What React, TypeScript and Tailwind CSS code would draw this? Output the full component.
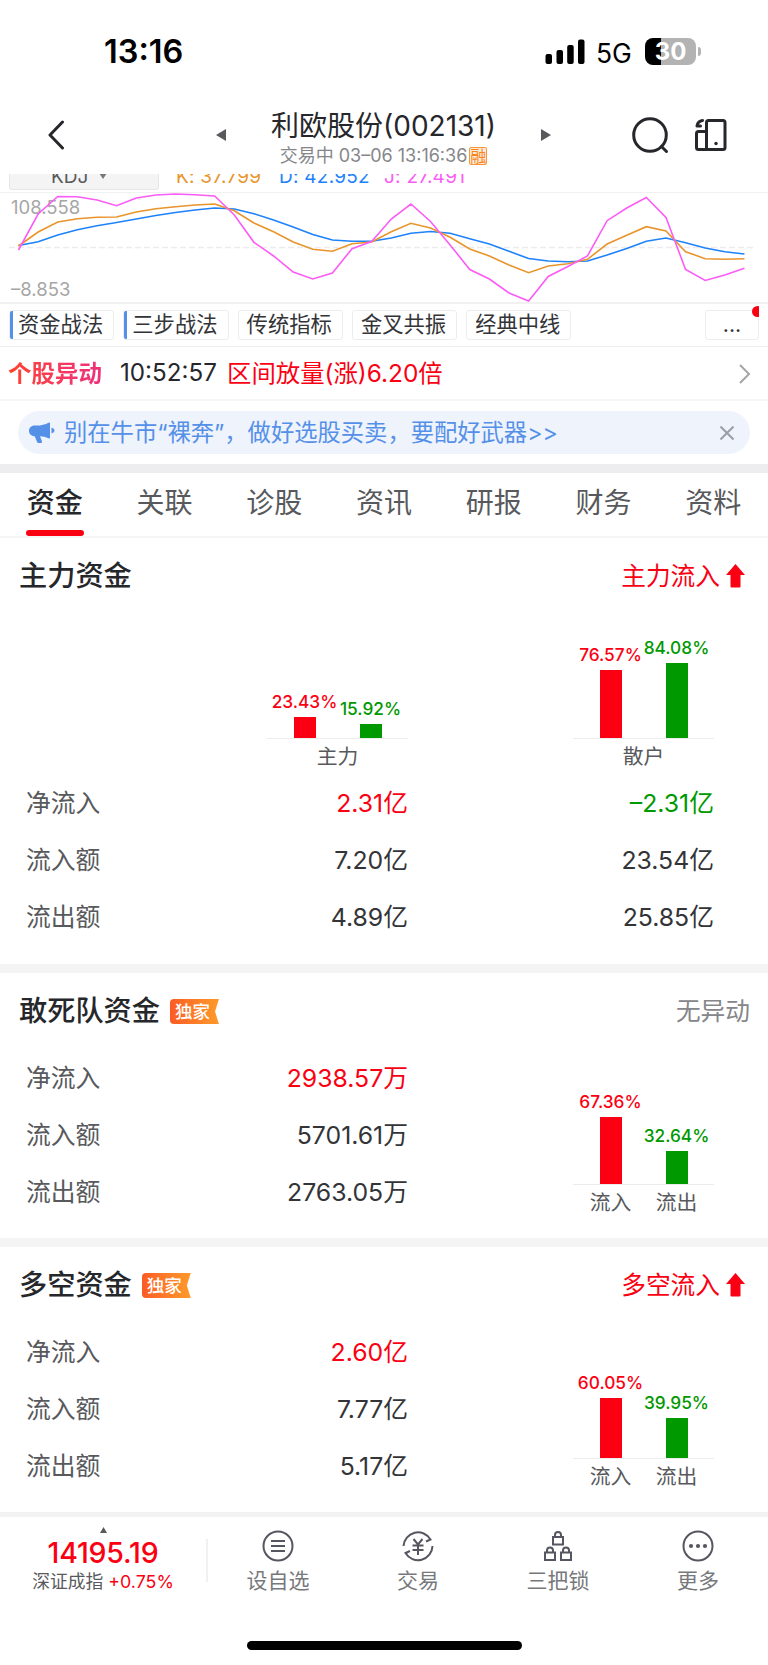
import type { ReactNode } from "react";

const STEP = 19.62;

const J = [250, 214, 196.5, 196.7, 200, 205.7, 198, 195, 194, 194.7, 196, 215, 242.3, 256, 272, 279, 273, 248.7, 241.5, 219, 204, 221.5, 245, 269.5, 279, 293, 301, 276.5, 266.5, 256, 220.7, 208, 197.5, 217.5, 269.5, 280.5, 275, 268.3];
const K = [246, 232, 222, 218.7, 217.3, 217, 212, 208.7, 206.7, 205, 204, 210.7, 223, 231.7, 242, 249.3, 251.3, 243.7, 242, 231.7, 223.3, 228, 237.3, 249, 256, 265, 272.7, 266, 263.7, 259.3, 244, 235.3, 226.7, 231, 251.7, 258.7, 259.3, 258.7];
const D = [245.5, 241.7, 235, 229.7, 225.7, 222.5, 219, 215.5, 212.5, 210, 208, 209, 213.7, 220, 227, 234.5, 240, 241.3, 241.3, 238, 233.3, 231.5, 233.3, 238.7, 244, 251.3, 258.5, 261, 261.7, 261, 255, 248.5, 241.3, 238, 242.7, 248, 251.7, 254];

const toPoints = (values: number[]) =>
  values.map((v, i) => `${18.5 + i * STEP},${v - 192}`).join(" ");

function StatusBar() {
  return (
    <div className="flex h-[103px] items-center pl-[104px] pr-[67px]">
      <span className="mt-[2px] text-[32.5px] font-semibold leading-none text-black">13:16</span>
      <svg className="ml-auto" width="40" height="26" viewBox="0 0 40 26">
        <rect x="0.5" y="15" width="6.5" height="10" rx="2" />
        <rect x="11.5" y="11" width="6.5" height="14" rx="2" />
        <rect x="22.2" y="6" width="6.5" height="19" rx="2" />
        <rect x="33" y="0.5" width="6.5" height="24.5" rx="2" />
      </svg>
      <span className="ml-[11px] mt-[4px] w-[37px] text-[26.5px] leading-none text-black">5G</span>
      <div className="ml-[12px] flex items-center">
        <div className="flex h-[27px] w-[51px] items-center justify-center rounded-[8px] bg-[linear-gradient(90deg,#000_31%,#b3b3b3_31%)] text-[24px] font-bold leading-none text-white">
          30
        </div>
        <div className="ml-[2px] h-[9px] w-[3px] rounded-r-full bg-[#b3b3b3]" />
      </div>
    </div>
  );
}

function Header() {
  return (
    <div className="flex h-[71px] items-center text-[#26272b]">
      <svg className="-mt-[7px] ml-[46px]" width="20" height="30" viewBox="0 0 20 30" fill="none" stroke="currentColor" strokeWidth="3" strokeLinecap="round" strokeLinejoin="round">
        <path d="M16.500 2 4 15l12.500 13" />
      </svg>
      <svg className="-mt-[8px] ml-[150px]" width="10" height="12" viewBox="0 0 10 12">
        <path d="M10 0v12L0 6Z" fill="#58595c" />
      </svg>
      <div className="flex w-[315px] flex-col items-center">
        <h1 className="-mt-[1px] whitespace-nowrap text-[28px] leading-[36px]">利欧股份(002131)</h1>
        <div className="flex items-center whitespace-nowrap text-[18px] leading-[24px] text-[#85868a]">
          交易中 03–06 13:16:36
          <span className="ml-[2px] flex h-[18px] w-[18px] items-center justify-center rounded-[2px] border border-[#f9963c] bg-[#fdebd9] text-[16px] leading-none text-[#f9861c]">融</span>
        </div>
      </div>
      <svg className="-mt-[8px]" width="10" height="12" viewBox="0 0 10 12">
        <path d="M0 0v12l10-6Z" fill="#58595c" />
      </svg>
      <svg className="-mt-[7px] ml-[80px]" width="40" height="40" viewBox="0 0 40 40" fill="none" stroke="currentColor" strokeWidth="3" strokeLinecap="round">
        <circle cx="19" cy="20" r="16.3" />
        <path d="m30.5 31.5 5 5" />
      </svg>
      <svg className="-mt-[7px] ml-[23px]" width="34" height="34" viewBox="0 0 34 34" fill="none" stroke="currentColor" strokeWidth="3" strokeLinejoin="round" strokeLinecap="round">
        <rect x="12.5" y="2.5" width="18.5" height="29" rx="2" />
        <path d="M12.500 13.500H4.500a2 2 0 0 0-2 2v14a2 2 0 0 0 2 2h8" />
        <path d="M8.500 2.500C5.500 2.800 3.500 5 3 8h3.500" />
        <circle cx="22" cy="25.500" r="1.700" fill="currentColor" stroke="none" />
      </svg>
    </div>
  );
}

function KdjChart() {
  return (
    <>
      <div className="flex h-[18px] items-end overflow-hidden text-[19px]">
        <div className="mb-[2px] ml-[9px] flex h-[40px] w-[150px] shrink-0 items-end rounded-[3px] border border-[#e6e6e6] bg-[#f4f4f4] pl-[41px] text-[#58595c]">
          <span className="mb-0 leading-[24px]">KDJ</span>
          <svg className="mb-[10px] ml-[11px]" width="8" height="6" viewBox="0 0 8 6">
            <path d="M0 0h8L4 6Z" fill="#77787a" />
          </svg>
        </div>
        <div className="mb-[3px] ml-[17px] flex whitespace-nowrap leading-[24px]">
          <span className="w-[103px] tracking-[0.25px] text-[#e8952b]">K: 37.799</span>
          <span className="w-[105px] tracking-[0.25px] text-[#1e82fa]">D: 42.952</span>
          <span className="tracking-[0.25px] text-[#fb5cf5]">J: 27.491</span>
        </div>
      </div>
      <div className="relative h-[112px] border-b-2 border-t border-[#f1f1f1]">
        <div className="flex h-full flex-col justify-between pb-[1px] pl-[11px] pt-[2px] text-[18.5px] leading-[24px] text-[#a6a6a6]">
          <span>108.558</span>
          <span>–8.853</span>
        </div>
        <svg className="absolute left-0 -top-px" width="768" height="112" viewBox="0 0 768 112" fill="none" strokeWidth="1.6">
          <path d="M9 55.500H756" stroke="#ececee" strokeWidth="1.300" strokeDasharray="6 3" />
          <polyline points={toPoints(D)} stroke="#1e82fa" />
          <polyline points={toPoints(K)} stroke="#e8952b" />
          <polyline points={toPoints(J)} stroke="#fb5cf5" />
        </svg>
      </div>
    </>
  );
}

const strategies = [
  { name: "资金战法", marked: true },
  { name: "三步战法", marked: true },
  { name: "传统指标" },
  { name: "金叉共振" },
  { name: "经典中线" },
];

function Strategies() {
  return (
    <div className="flex h-[43px] items-center gap-[9px] border-b border-[#ececec] px-[9px] text-[21.3px] text-[#333437]">
      {strategies.map((s) => (
        <div key={s.name} className="relative flex h-[30px] w-[105.3px] items-center overflow-hidden rounded-[3px] border border-[#ededed] pl-[8px] leading-none">
          {s.marked && <span className="absolute -left-px -top-px h-[30px] w-[4px] bg-[#5590e8]" />}
          {s.name}
        </div>
      ))}
      <div className="relative ml-auto flex h-[30px] w-[54px] items-center justify-center rounded-[3px] border border-[#ededed] leading-none">
        ...
        <span className="absolute -right-[1px] -top-[5px] h-[11px] w-[7px] overflow-hidden">
          <span className="block h-[11px] w-[11px] rounded-full bg-[#fa0012]" />
        </span>
      </div>
    </div>
  );
}

function Alerts() {
  return (
    <>
      <div className="flex h-[54px] items-center border-b-2 border-[#f5f5f5] pl-[8px] pr-[17px] pt-[1px] text-[24.4px] leading-none">
        <span className="bg-linear-to-r from-[#ff4124] to-[#ee2f7c] bg-clip-text text-[23.5px] font-bold leading-[30px] text-transparent">个股异动</span>
        <span className="ml-[18px] w-[107px] text-[24.2px] text-[#26272b]">10:52:57</span>
        <span className="text-[#fa0012]">区间放量(涨)6.20倍</span>
        <svg className="ml-auto" width="13" height="22" viewBox="0 0 13 22" fill="none" stroke="#a5a5a8" strokeWidth="2">
          <path d="m2 2 9 9-9 9" />
        </svg>
      </div>
      <div className="flex h-[63px] items-center px-[18px]">
        <div className="flex h-[43px] w-full items-center rounded-full bg-[#eef3fc] pl-[10px] pr-[16px] text-[23.3px] leading-none text-[#5590e8]">
          <svg width="28" height="24" viewBox="0 0 28 24" fill="currentColor">
            <path d="M7 4.500C12 4.800 17 3.700 20.500 1.700Q22 1 22 2.500V16.500Q22 18 20.500 17.300C18 16 14.800 15.300 12 15.200L14 20.500Q14.400 22 12.800 22H10.500Q9.500 22 9.100 21L6.700 15.200C3.500 15 1 13 1 9.900S3.500 4.300 7 4.500Z" />
            <path d="M23.500 6.500Q26.500 7.500 26.500 9.500T23.500 12.500Z" />
          </svg>
          <span className="ml-[8px] whitespace-nowrap">别在牛市“裸奔”，做好选股买卖，要配好武器&gt;&gt;</span>
          <svg className="ml-auto" width="14" height="14" viewBox="0 0 14 14" stroke="#9a9da3" strokeWidth="2">
            <path d="m0.500 0.500 13 13M13.500 0.500l-13 13" />
          </svg>
        </div>
      </div>
      <div className="h-[9px] bg-[#ededef]" />
    </>
  );
}

function Tabs() {
  const tabs = ["资金", "关联", "诊股", "资讯", "研报", "财务", "资料"];
  return (
    <div className="grid h-[65px] grid-cols-7 border-b-2 border-[#f5f5f5] text-[28px] text-[#58595c]">
      {tabs.map((tab, i) => (
        <div key={tab} className={i === 0 ? "relative text-center font-medium leading-[61px] text-[#26272b]" : "text-center leading-[61px]"}>
          {tab}
          {i === 0 && <span className="absolute bottom-0 left-[26px] h-[6px] w-[58px] rounded-full bg-[#fa0012]" />}
        </div>
      ))}
    </div>
  );
}

function Badge() {
  return (
    <span className="ml-[10px] flex h-[25px] w-[49px] items-center rounded-l-[4px] bg-linear-to-r from-[#fb5a24] to-[#fd9a2b] pl-[5px] text-[17.5px] font-medium leading-none text-white [clip-path:polygon(0_0,100%_0,92%_50%,100%_100%,0_100%)]">
      独家
    </span>
  );
}

function Inflow({ children }: { children: ReactNode }) {
  return (
    <span className="ml-auto flex items-center pr-[5px] text-[#fa0012]">
      {children}
      <svg className="ml-[6px]" width="19" height="24" viewBox="0 0 19 24" fill="currentColor">
        <path d="M9.500 0 19 11h-4.500v11.500q0 1-1 1h-8q-1 0-1-1V11H0Z" />
      </svg>
    </span>
  );
}

function SectionHead({ title, badge, children }: { title: string; badge?: boolean; children: ReactNode }) {
  return (
    <div className="flex h-[77px] items-center pl-[19px] pr-[18px] text-[24.7px] leading-none">
      <h2 className="text-[28.2px] font-medium text-[#26272b]">{title}</h2>
      {badge && <Badge />}
      {children}
    </div>
  );
}

type Bar = { value: string; height: number };

function Bars({ inflow, outflow, labels }: { inflow: Bar; outflow: Bar; labels: string[] }) {
  const bars = [
    { ...inflow, text: "text-[#fa0012]", fill: "bg-[#fa0012]" },
    { ...outflow, text: "text-[#009900]", fill: "bg-[#009900]" },
  ];
  return (
    <div className="w-[141px]">
      <div className="flex items-end justify-center border-b border-[#ececec]">
        {bars.map((b) => (
          <div key={b.value} className="flex w-[66px] flex-col items-center">
            <span className={`mb-[5px] text-[17.3px] font-medium leading-[20px] ${b.text}`}>{b.value}</span>
            <div className={`w-[22px] ${b.fill}`} style={{ height: b.height }} />
          </div>
        ))}
      </div>
      <div className="flex h-[36px] items-center justify-center text-[20.8px] leading-none text-[#58595c]">
        {labels.map((l) => (
          <span key={l} className="w-[66px] text-center">{l}</span>
        ))}
      </div>
    </div>
  );
}

const rowLabels = ["净流入", "流入额", "流出额"];

function Rows({ columns }: { columns: string[][] }) {
  return (
    <div className="pl-[26px] text-[24.8px] leading-[57px] text-[#333437]">
      {rowLabels.map((label, i) => (
        <div key={label} className="flex">
          <span className="w-[120px] text-[#58595c]">{label}</span>
          {columns.map((col, c) => (
            <span
              key={c}
              className={`text-right ${c === 0 ? "w-[262px]" : "w-[306px]"} ${i > 0 ? "" : col[i].startsWith("–") ? "text-[#009900]" : "text-[#fa0012]"}`}
            >
              {col[i]}
            </span>
          ))}
        </div>
      ))}
    </div>
  );
}

function FlowSection({ title, status, values, inflow, outflow }: { title: string; status: ReactNode; values: string[]; inflow: Bar; outflow: Bar }) {
  return (
    <div className="h-[265px]">
      <SectionHead title={title} badge>{status}</SectionHead>
      <div className="flex items-end">
        <Rows columns={[values]} />
        <div className="ml-[165px]">
          <Bars inflow={inflow} outflow={outflow} labels={["流入", "流出"]} />
        </div>
      </div>
    </div>
  );
}

function Lock({ x, y }: { x: number; y: number }) {
  return (
    <g transform={`translate(${x} ${y})`}>
      <rect x="0" y="5.5" width="10" height="7.500" />
      <path d="M2 5.500V3.500a3 3 0 0 1 6 0v2" />
    </g>
  );
}

function BottomBar() {
  const items = [
    {
      name: "设自选",
      icon: (
        <>
          <circle cx="16" cy="16" r="14.5" />
          <path d="M9 11h14M9 16h14M9 21h14" strokeWidth="2.2" />
        </>
      ),
    },
    {
      name: "交易",
      icon: (
        <>
          <path d="M1.500 16A14.500 14.500 0 0 1 28.500 9.500L24 11.500M30.500 16A14.500 14.500 0 0 1 3.500 23L8 21" />
          <path d="m11.500 9 4.500 5.500L20.500 9M16 14.500V25M10.500 15.500h11M10.500 20h11" />
        </>
      ),
    },
    {
      name: "三把锁",
      icon: (
        <>
          <Lock x={11} y={1.5} />
          <Lock x={3} y={17} />
          <Lock x={19} y={17} />
        </>
      ),
    },
    {
      name: "更多",
      icon: (
        <>
          <circle cx="16" cy="16" r="14.5" />
          <g fill="currentColor" stroke="none">
            <circle cx="9" cy="16" r="2.1" />
            <circle cx="16" cy="16" r="2.1" />
            <circle cx="23" cy="16" r="2.1" />
          </g>
        </>
      ),
    },
  ];
  return (
    <div className="flex h-[129px] border-t-[5px] border-[#f2f2f2]">
      <div className="flex w-[206px] flex-col items-center pt-[10px]">
        <svg width="7" height="6" viewBox="0 0 7 6">
          <path d="M3.500 0 7 6H0Z" fill="#58595c" />
        </svg>
        <span className="mt-[3px] text-[28.5px] font-medium leading-[34px] tracking-[-0.2px] text-[#fa0012]">14195.19</span>
        <span className="mt-[1px] whitespace-nowrap text-[17.8px] leading-[22px] text-[#58595c]">
          深证成指 <span className="text-[#fa0012]">+0.75%</span>
        </span>
      </div>
      <div className="mt-[22px] h-[43px] w-[2px] bg-[#f1f1f1]" />
      <div className="grid grid-cols-4 pt-[13px]">
        {items.map((item) => (
          <div key={item.name} className="flex w-[140px] flex-col items-center text-[21px] leading-[37px] text-[#77787b]">
            <svg width="32" height="32" viewBox="0 0 32 32" fill="none" stroke="currentColor" strokeWidth="2" className="text-[#55565f]">
              {item.icon}
            </svg>
            {item.name}
          </div>
        ))}
      </div>
    </div>
  );
}

export default function App() {
  return (
    <div lang="zh-CN" className="flex h-[1665px] w-[768px] flex-col overflow-hidden bg-white font-['Inter','Noto_Sans_CJK_SC',sans-serif]">
      <StatusBar />
      <Header />
      <KdjChart />
      <Strategies />
      <Alerts />
      <Tabs />

      <div className="h-[426px]">
        <SectionHead title="主力资金">
          <Inflow>主力流入</Inflow>
        </SectionHead>
        <div className="flex h-[160px] items-end gap-[165px] pl-[267px]">
          <Bars inflow={{ value: "23.43%", height: 21 }} outflow={{ value: "15.92%", height: 14 }} labels={["主力"]} />
          <Bars inflow={{ value: "76.57%", height: 68 }} outflow={{ value: "84.08%", height: 75 }} labels={["散户"]} />
        </div>
        <Rows columns={[["2.31亿", "7.20亿", "4.89亿"], ["–2.31亿", "23.54亿", "25.85亿"]]} />
      </div>
      <div className="h-[9px] bg-[#f4f4f4]" />

      <FlowSection
        title="敢死队资金"
        status={<span className="ml-auto text-[#85868a]">无异动</span>}
        values={["2938.57万", "5701.61万", "2763.05万"]}
        inflow={{ value: "67.36%", height: 67 }}
        outflow={{ value: "32.64%", height: 33 }}
      />
      <div className="h-[9px] bg-[#f4f4f4]" />

      <FlowSection
        title="多空资金"
        status={<Inflow>多空流入</Inflow>}
        values={["2.60亿", "7.77亿", "5.17亿"]}
        inflow={{ value: "60.05%", height: 60 }}
        outflow={{ value: "39.95%", height: 40 }}
      />

      <BottomBar />
      <div className="mx-auto h-[9px] w-[275px] rounded-full bg-black" />
    </div>
  );
}
